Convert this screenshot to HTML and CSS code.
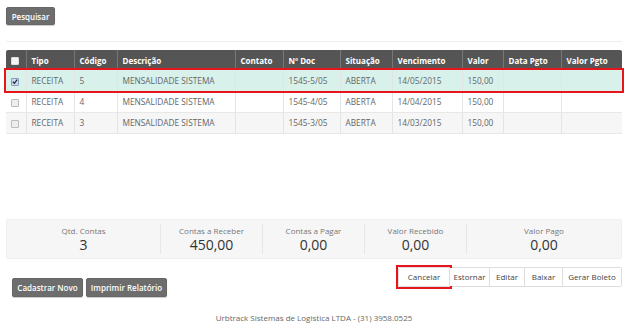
FILE: index.html
```html
<!DOCTYPE html>
<html lang="pt-BR">
<head>
  <meta charset="UTF-8" />
  <title>Contas</title>
  <link rel="stylesheet" href="styles.css">
</head>
<body>
  <div class="page">
    <div class="search-bar">
      <button class="btn-dark">Pesquisar</button>
    </div>

    <hr class="divider" />

    <table class="contas">
      <thead>
        <tr>
          <th class="col-check"><span class="check check-head"></span></th>
          <th class="col-tipo">Tipo</th>
          <th class="col-codigo">Código</th>
          <th class="col-desc">Descrição</th>
          <th class="col-contato">Contato</th>
          <th class="col-doc">Nº Doc</th>
          <th class="col-sit">Situação</th>
          <th class="col-venc">Vencimento</th>
          <th class="col-valor">Valor</th>
          <th class="col-data">Data Pgto</th>
          <th class="col-pgto">Valor Pgto</th>
        </tr>
      </thead>
      <tbody>
        <tr class="selected">
          <td><span class="check checked">
            <svg width="7" height="7" viewBox="0 0 7 7"><path d="M1 3.8 L2.8 5.6 L6 1.2" fill="none" stroke="#222" stroke-width="1.4"/></svg>
          </span></td>
          <td>RECEITA</td>
          <td>5</td>
          <td>MENSALIDADE SISTEMA</td>
          <td></td>
          <td>1545-5/05</td>
          <td>ABERTA</td>
          <td>14/05/2015</td>
          <td>150,00</td>
          <td></td>
          <td></td>
        </tr>
        <tr>
          <td><span class="check"></span></td>
          <td>RECEITA</td>
          <td>4</td>
          <td>MENSALIDADE SISTEMA</td>
          <td></td>
          <td>1545-4/05</td>
          <td>ABERTA</td>
          <td>14/04/2015</td>
          <td>150,00</td>
          <td></td>
          <td></td>
        </tr>
        <tr class="striped">
          <td><span class="check"></span></td>
          <td>RECEITA</td>
          <td>3</td>
          <td>MENSALIDADE SISTEMA</td>
          <td></td>
          <td>1545-3/05</td>
          <td>ABERTA</td>
          <td>14/03/2015</td>
          <td>150,00</td>
          <td></td>
          <td></td>
        </tr>
      </tbody>
    </table>

    <div class="resumo">
      <div class="resumo-item w1">
        <span class="label">Qtd. Contas</span>
        <span class="value">3</span>
      </div>
      <div class="resumo-item w2">
        <span class="label">Contas a Receber</span>
        <span class="value">450,00</span>
      </div>
      <div class="resumo-item w2">
        <span class="label">Contas a Pagar</span>
        <span class="value">0,00</span>
      </div>
      <div class="resumo-item w2">
        <span class="label">Valor Recebido</span>
        <span class="value">0,00</span>
      </div>
      <div class="resumo-item last">
        <span class="label">Valor Pago</span>
        <span class="value">0,00</span>
      </div>
    </div>

    <div class="acoes">
      <div class="btn-group">
        <button class="active">Cancelar</button>
        <button class="b-estornar">Estornar</button>
        <button class="b-editar">Editar</button>
        <button class="b-baixar">Baixar</button>
        <button class="b-boleto">Gerar Boleto</button>
      </div>
    </div>

    <div class="acoes-left">
      <button class="btn-dark">Cadastrar Novo</button>
      <button class="btn-dark">Imprimir Relatório</button>
    </div>

    <footer class="rodape">Urbtrack Sistemas de Logistica LTDA - (31) 3958.0525</footer>
  </div>
</body>
</html>
```

FILE: styles.css
```css
* {
  box-sizing: border-box;
  margin: 0;
  padding: 0;
}

body {
  font-family: "Open Sans", sans-serif;
  background: #fff;
  color: #555;
  font-size: 8px;
}

.page {
  width: 616px;
  margin-left: 6px;
  padding-top: 7px;
}

.btn-dark {
  font-family: "Open Sans", sans-serif;
  font-size: 8px;
  font-weight: 600;
  color: #fff;
  background: #6d6d6d;
  border: 1px solid #666;
  border-radius: 2px;
  box-shadow: 0 1px 1px rgba(0, 0, 0, 0.2);
  padding: 0 2px;
  height: 19px;
  white-space: nowrap;
}

.search-bar .btn-dark {
  width: 49px;
  height: 18px;
}

.divider {
  border: none;
  border-top: 1px solid #eee;
  margin-top: 16px;
  margin-bottom: 8px;
}

.contas {
  width: 616px;
  border-collapse: collapse;
  table-layout: fixed;
}

.contas th {
  background: #555;
  color: #fff;
  font-weight: 700;
  text-align: left;
  height: 20px;
  padding: 0 5px;
  border-left: 1px solid #777;
}

.contas th:first-child {
  border-left: none;
  border-top-left-radius: 2px;
}

.contas th:last-child {
  border-top-right-radius: 2px;
}

.contas td {
  height: 21px;
  padding: 0 5px;
  color: #666;
  font-size: 8.3px;
  border-left: 1px solid #e4e4e4;
  border-bottom: 1px solid #e8e8e8;
  white-space: nowrap;
}

.contas td:first-child {
  border-left: none;
}

.col-check { width: 20px; }
.col-tipo { width: 48px; }
.col-codigo { width: 43px; }
.col-desc { width: 118px; }
.col-contato { width: 48px; }
.col-doc { width: 57px; }
.col-sit { width: 52px; }
.col-venc { width: 70px; }
.col-valor { width: 41px; }
.col-data { width: 58px; }
.col-pgto { width: 61px; }

.contas tr.selected td {
  background: #d9f1eb;
}

.contas tr.selected {
  outline: 2px solid #e8141c;
  outline-offset: 0;
}

.contas tr.striped td {
  background: #f6f6f6;
}

.check {
  display: inline-flex;
  align-items: center;
  justify-content: center;
  width: 8px;
  height: 8px;
  border: 1px solid #bbb;
  border-radius: 1px;
  background: #eee;
  vertical-align: middle;
}

.check-head {
  background: #f4f4f4;
  border-color: #ddd;
}

.check.checked {
  background: #c9d8f3;
  border-color: #8a9cc0;
}

.resumo {
  display: flex;
  margin-top: 85px;
  height: 40px;
  background: #f6f6f6;
  border: 1px solid #efefef;
  border-radius: 2px;
}

.resumo-item {
  display: flex;
  flex-direction: column;
  align-items: center;
  justify-content: center;
  gap: 1px;
  border-right: 1px solid #e6e6e6;
  margin: 4px 0;
}

.w1 { width: 154px; }
.w2 { width: 102px; }

.resumo-item.last {
  flex: 1;
  border-right: none;
}

.resumo-item .label {
  font-size: 8px;
  color: #777;
}

.resumo-item .value {
  font-size: 14px;
  color: #333;
  line-height: 16px;
}

.acoes {
  display: flex;
  justify-content: flex-end;
  margin-top: 8px;
}

.btn-group {
  display: flex;
  border: 1px solid #ddd;
  border-radius: 2px;
}

.btn-group button {
  font-family: "Open Sans", sans-serif;
  font-size: 8px;
  color: #444;
  background: #fff;
  border: none;
  border-left: 1px solid #ddd;
  height: 18px;
  padding: 0;
}

.btn-group button:first-child {
  border-left: none;
}

.btn-group button.active {
  outline: 2px solid #e8141c;
  outline-offset: 1px;
  width: 50px;
}

.b-estornar { width: 40px; }
.b-editar { width: 35px; }
.b-baixar { width: 38px; }
.b-boleto { width: 59px; }

.acoes-left {
  display: flex;
  gap: 3px;
  margin-top: -9px;
  margin-left: 6px;
}

.acoes-left .btn-dark:first-child { width: 71px; }
.acoes-left .btn-dark:last-child { width: 81px; }

.rodape {
  text-align: center;
  margin-top: 15px;
  color: #666;
  font-size: 8px;
}
```
